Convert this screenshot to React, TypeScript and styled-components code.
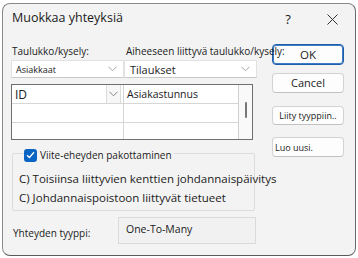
import React from 'react';
import styled, { createGlobalStyle } from 'styled-components';

const GlobalStyle = createGlobalStyle`
  html, body {
    margin: 0;
    padding: 0;
    background: #ffffff;
  }
  body {
    font-family: "Segoe UI", "Open Sans", "Noto Sans", sans-serif;
    color: #1b1b1b;
  }
`;

const Dialog = styled.div`
  box-sizing: border-box;
  width: 354px;
  height: 253px;
  margin: 3px 0 0 2px;
  background: #f3f3f3;
  border: 1px solid #8a8a8a;
  border-bottom-color: #5a5a5a;
  border-right-color: #6a6a6a;
  border-radius: 8px;
  display: flex;
  flex-direction: column;
  overflow: hidden;
`;

const TitleBar = styled.div`
  height: 38px;
  display: flex;
  align-items: flex-start;
  padding: 7px 17px 0 9px;
  box-sizing: border-box;
`;

const Title = styled.div`
  flex: 1;
  font-size: 12.5px;
  line-height: 14px;
`;

const TitleButton = styled.div<{ $w: number; $gap?: number }>`
  width: ${p => p.$w}px;
  margin-left: ${p => p.$gap ?? 0}px;
  height: 16px;
  display: flex;
  align-items: center;
  justify-content: center;
  font-size: 13px;
  line-height: 16px;
`;

const Body = styled.div`
  display: flex;
  padding: 2px 0 0 8px;
`;

const Main = styled.div`
  width: 246px;
  flex-shrink: 0;
  display: flex;
  flex-direction: column;
`;

const LabelRow = styled.div`
  display: flex;
  height: 13px;
  margin-top: 1px;
  position: relative;
  z-index: 1;
`;

const FieldLabel = styled.div<{ $w?: number }>`
  ${p => (p.$w ? `width: ${p.$w}px;` : '')}
  flex-shrink: 0;
  padding-left: 1px;
  font-size: 10px;
  line-height: 13px;
  white-space: nowrap;
  color: #222;
`;

const ComboRow = styled.div`
  display: flex;
  margin-top: 2px;
`;

const Combo = styled.div<{ $w: number; $small?: boolean }>`
  box-sizing: border-box;
  width: ${p => p.$w}px;
  height: 18px;
  background: #ffffff;
  border: 1px solid #e2e2e2;
  border-bottom-color: #c9c9c9;
  display: flex;
  align-items: center;
  justify-content: space-between;
  padding: 0 6px 0 ${p => (p.$small ? 4 : 5)}px;
  font-size: ${p => (p.$small ? 9 : 11)}px;
`;

const Grid = styled.div`
  box-sizing: border-box;
  width: 242px;
  height: 56px;
  margin-top: 6px;
  border: 1px solid #6f6f6f;
  background: #ffffff;
  display: grid;
  grid-template-columns: 112px 114px 1fr;
`;

const Cells = styled.div`
  display: grid;
  grid-template-rows: 19px 19px 1fr;
`;

const Cell = styled.div<{ $last?: boolean; $divider?: boolean }>`
  border-bottom: ${p => (p.$last ? 'none' : '1px solid #d6d6d6')};
  border-right: ${p => (p.$divider ? '1px solid #d6d6d6' : 'none')};
  display: flex;
  align-items: center;
  justify-content: space-between;
  padding-left: 3px;
`;

const CellText = styled.span<{ $size: number }>`
  font-size: ${p => p.$size}px;
`;

const DropButton = styled.div`
  box-sizing: border-box;
  width: 15px;
  height: 18px;
  border-left: 1px solid #dcdcdc;
  border-right: 1px solid #dcdcdc;
  background: #f7f7f7;
  display: flex;
  align-items: center;
  justify-content: center;
  margin-right: 2px;
`;

const ScrollTrack = styled.div`
  background: #f9f9f9;
  border-left: 1px solid #cfcfcf;
  display: flex;
  justify-content: center;
  padding-top: 17px;
`;

const ScrollThumb = styled.div`
  width: 2px;
  height: 16px;
  border-radius: 1px;
  background: #777;
`;

const Options = styled.fieldset`
  box-sizing: border-box;
  width: 243px;
  height: 67px;
  margin: 4px 0 0 1px;
  padding: 7px 0 0 6px;
  border: 1px solid #dcdcdc;
  border-radius: 2px;
  min-width: 0;
`;

const Legend = styled.legend`
  padding: 4px 2px 0 0;
  margin-left: 5px;
  display: flex;
  align-items: center;
  gap: 3px;
  font-size: 10px;
  line-height: 14px;
`;

const CheckBox = styled.span`
  width: 13px;
  height: 13px;
  border-radius: 3px;
  background: #0a64c4;
  display: inline-flex;
  align-items: center;
  justify-content: center;
`;

const OptionText = styled.div`
  font-size: 11.5px;
  line-height: 19px;
  white-space: nowrap;
`;

const TypeRow = styled.div`
  display: flex;
  align-items: center;
  margin-top: 6px;
`;

const TypeLabel = styled.div`
  width: 105px;
  padding-left: 2px;
  font-size: 10px;
  padding-top: 4px;
`;

const TypeBox = styled.div`
  box-sizing: border-box;
  width: 138px;
  height: 27px;
  border: 1px solid #dadada;
  background: #f1f1f1;
  padding: 0 0 3px 7px;
  display: flex;
  align-items: center;
  font-size: 10.5px;
`;

const Side = styled.div`
  width: 72px;
  margin-left: 15px;
  display: flex;
  flex-direction: column;
`;

const Button = styled.div<{ $h: number; $top: number; $primary?: boolean; $left?: boolean; $size: number }>`
  box-sizing: border-box;
  height: ${p => p.$h}px;
  margin-top: ${p => p.$top}px;
  background: #fdfdfd;
  border: 1px solid ${p => (p.$primary ? '#1f5fa8' : '#d3d3d3')};
  border-bottom-color: ${p => (p.$primary ? '#1f5fa8' : '#c2c2c2')};
  box-shadow: ${p => (p.$primary ? 'inset 0 0 0 1px #3d7cc4' : 'none')};
  border-radius: 4px;
  display: flex;
  align-items: center;
  justify-content: ${p => (p.$left ? 'flex-start' : 'center')};
  padding: ${p => (p.$left ? '0 0 0 2px' : '0 0 1px 0')};
  font-size: ${p => p.$size}px;
  white-space: nowrap;
`;

const Chevron = ({ color = '#777' }: { color?: string }) => (
  <svg width="9" height="6" viewBox="0 0 9 6">
    <path d="M0.5 0.8 L4.5 4.8 L8.5 0.8" fill="none" stroke={color} strokeWidth="0.9" />
  </svg>
);

export default function App() {
  return (
    <>
      <GlobalStyle />
      <Dialog>
        <TitleBar>
          <Title>Muokkaa yhteyksiä</Title>
          <TitleButton $w={14}>?</TitleButton>
          <TitleButton $w={12} $gap={31}>
            <svg width="11" height="11" viewBox="0 0 11 11">
              <path d="M0.5 0.5 L10.5 10.5 M10.5 0.5 L0.5 10.5" stroke="#333" strokeWidth="1" />
            </svg>
          </TitleButton>
        </TitleBar>
        <Body>
          <Main>
            <LabelRow>
              <FieldLabel $w={113}>Taulukko/kysely:</FieldLabel>
              <FieldLabel>Aiheeseen liittyvä taulukko/kysely:</FieldLabel>
            </LabelRow>
            <ComboRow>
              <Combo $w={113} $small>
                <span>Asiakkaat</span>
                <Chevron color="#999" />
              </Combo>
              <Combo $w={133}>
                <span>Tilaukset</span>
                <Chevron color="#999" />
              </Combo>
            </ComboRow>
            <Grid>
              <Cells>
                <Cell $divider>
                  <CellText $size={12}>ID</CellText>
                  <DropButton>
                    <Chevron />
                  </DropButton>
                </Cell>
                <Cell $divider />
                <Cell $divider $last />
              </Cells>
              <Cells>
                <Cell>
                  <CellText $size={10.5}>Asiakastunnus</CellText>
                </Cell>
                <Cell />
                <Cell $last />
              </Cells>
              <ScrollTrack>
                <ScrollThumb />
              </ScrollTrack>
            </Grid>
            <Options>
              <Legend>
                <CheckBox>
                  <svg width="9" height="8" viewBox="0 0 9 8">
                    <path d="M1 4.2 L3.4 6.5 L8 1.3" fill="none" stroke="#fff" strokeWidth="1.3" />
                  </svg>
                </CheckBox>
                Viite-eheyden pakottaminen
              </Legend>
              <OptionText>C) Toisiinsa liittyvien kenttien johdannaispäivitys</OptionText>
              <OptionText>C) Johdannaispoistoon liittyvät tietueet</OptionText>
            </Options>
            <TypeRow>
              <TypeLabel>Yhteyden tyyppi:</TypeLabel>
              <TypeBox>One-To-Many</TypeBox>
            </TypeRow>
          </Main>
          <Side>
            <Button $h={21} $top={0} $primary $size={11.5}>OK</Button>
            <Button $h={20} $top={8} $size={11}>Cancel</Button>
            <Button $h={19} $top={13} $size={9}>Liity tyyppiin..</Button>
            <Button $h={20} $top={12} $left $size={9}>Luo uusi.</Button>
          </Side>
        </Body>
      </Dialog>
    </>
  );
}
